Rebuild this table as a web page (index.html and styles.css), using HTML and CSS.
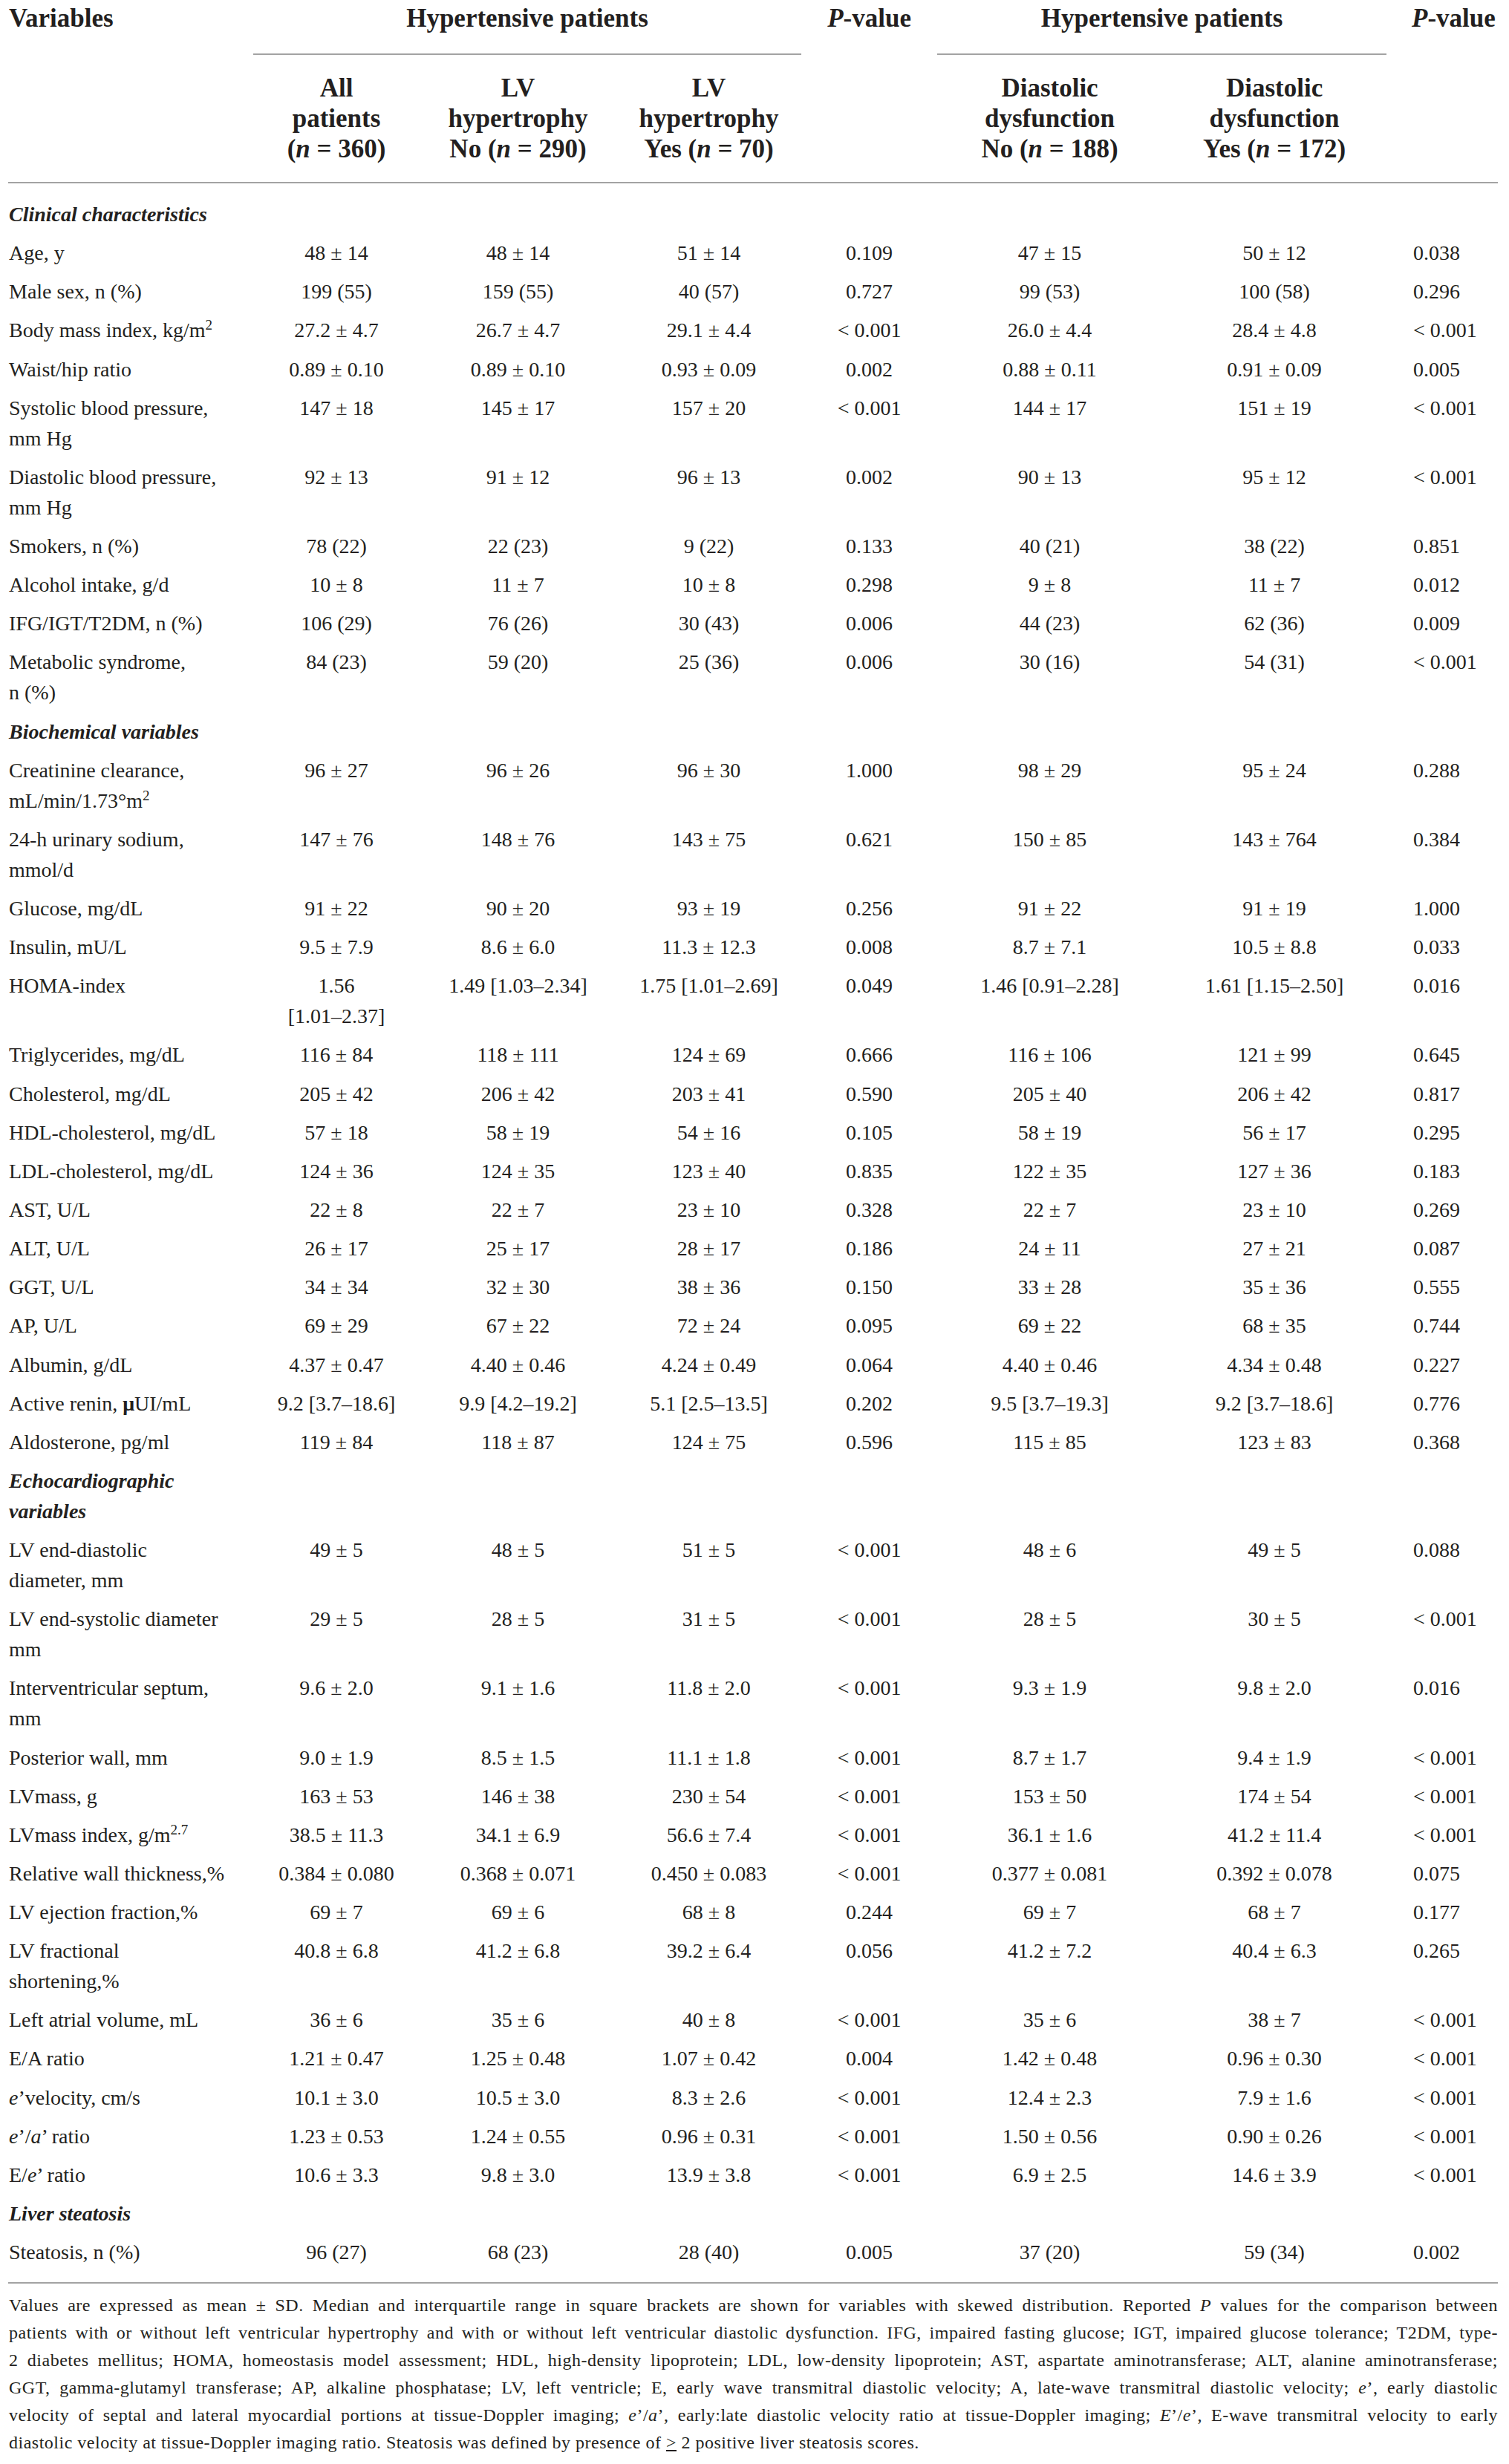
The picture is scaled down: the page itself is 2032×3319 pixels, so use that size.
FILE: index.html
```html
<!DOCTYPE html>
<html>
<head>
  <meta charset="UTF-8">
  <title>Characteristics of hypertensive patients</title>
  <link rel="stylesheet" href="styles.css">
</head>
<body>
  <div class="page">
    <table class="data-table">
      <colgroup>
        <col class="c-var">
        <col class="c-all">
        <col class="c-lvno">
        <col class="c-lvyes">
        <col class="c-p1">
        <col class="c-ddno">
        <col class="c-ddyes">
        <col class="c-p2">
      </colgroup>
      <thead>
        <tr class="head-top">
          <th rowspan="2" class="var-head">Variables</th>
          <th colspan="3" class="group">Hypertensive patients</th>
          <th rowspan="2" class="p-head"><i>P</i>-value</th>
          <th colspan="2" class="group">Hypertensive patients</th>
          <th rowspan="2" class="p-head p-last"><i>P</i>-value</th>
        </tr>
        <tr class="head-sub">
          <th>All<br>patients<br>(<i>n</i> = 360)</th>
          <th>LV<br>hypertrophy<br>No (<i>n</i> = 290)</th>
          <th>LV<br>hypertrophy<br>Yes (<i>n</i> = 70)</th>
          <th>Diastolic<br>dysfunction<br>No (<i>n</i> = 188)</th>
          <th>Diastolic<br>dysfunction<br>Yes (<i>n</i> = 172)</th>
        </tr>
      </thead>
      <tbody>
        <tr class="first-row"><td class="section">Clinical characteristics</td><td colspan="7"></td></tr>
        <tr><td>Age, y</td><td>48 ± 14</td><td>48 ± 14</td><td>51 ± 14</td><td>0.109</td><td>47 ± 15</td><td>50 ± 12</td><td>0.038</td></tr>
        <tr><td>Male sex, n&nbsp;(%)</td><td>199 (55)</td><td>159 (55)</td><td>40 (57)</td><td>0.727</td><td>99 (53)</td><td>100 (58)</td><td>0.296</td></tr>
        <tr><td>Body mass index, kg/m<sup>2</sup></td><td>27.2 ± 4.7</td><td>26.7 ± 4.7</td><td>29.1 ± 4.4</td><td>&lt; 0.001</td><td>26.0 ± 4.4</td><td>28.4 ± 4.8</td><td>&lt; 0.001</td></tr>
        <tr><td>Waist/hip ratio</td><td>0.89 ± 0.10</td><td>0.89 ± 0.10</td><td>0.93 ± 0.09</td><td>0.002</td><td>0.88 ± 0.11</td><td>0.91 ± 0.09</td><td>0.005</td></tr>
        <tr><td>Systolic blood pressure, mm Hg</td><td>147 ± 18</td><td>145 ± 17</td><td>157 ± 20</td><td>&lt; 0.001</td><td>144 ± 17</td><td>151 ± 19</td><td>&lt; 0.001</td></tr>
        <tr><td>Diastolic blood pressure, mm Hg</td><td>92 ± 13</td><td>91 ± 12</td><td>96 ± 13</td><td>0.002</td><td>90 ± 13</td><td>95 ± 12</td><td>&lt; 0.001</td></tr>
        <tr><td>Smokers, n&nbsp;(%)</td><td>78 (22)</td><td>22 (23)</td><td>9 (22)</td><td>0.133</td><td>40 (21)</td><td>38 (22)</td><td>0.851</td></tr>
        <tr><td>Alcohol intake, g/d</td><td>10 ± 8</td><td>11 ± 7</td><td>10 ± 8</td><td>0.298</td><td>9 ± 8</td><td>11 ± 7</td><td>0.012</td></tr>
        <tr><td>IFG/IGT/T2DM, n&nbsp;(%)</td><td>106 (29)</td><td>76 (26)</td><td>30 (43)</td><td>0.006</td><td>44 (23)</td><td>62 (36)</td><td>0.009</td></tr>
        <tr><td>Metabolic syndrome, n&nbsp;(%)</td><td>84 (23)</td><td>59 (20)</td><td>25 (36)</td><td>0.006</td><td>30 (16)</td><td>54 (31)</td><td>&lt; 0.001</td></tr>
        <tr><td class="section">Biochemical variables</td><td colspan="7"></td></tr>
        <tr><td>Creatinine clearance, mL/min/1.73°m<sup>2</sup></td><td>96 ± 27</td><td>96 ± 26</td><td>96 ± 30</td><td>1.000</td><td>98 ± 29</td><td>95 ± 24</td><td>0.288</td></tr>
        <tr><td>24-h urinary sodium, mmol/d</td><td>147 ± 76</td><td>148 ± 76</td><td>143 ± 75</td><td>0.621</td><td>150 ± 85</td><td>143 ± 764</td><td>0.384</td></tr>
        <tr><td>Glucose, mg/dL</td><td>91 ± 22</td><td>90 ± 20</td><td>93 ± 19</td><td>0.256</td><td>91 ± 22</td><td>91 ± 19</td><td>1.000</td></tr>
        <tr><td>Insulin, mU/L</td><td>9.5 ± 7.9</td><td>8.6 ± 6.0</td><td>11.3 ± 12.3</td><td>0.008</td><td>8.7 ± 7.1</td><td>10.5 ± 8.8</td><td>0.033</td></tr>
        <tr><td>HOMA-index</td><td>1.56 <span class="range">[1.01–2.37]</span></td><td>1.49 <span class="range">[1.03–2.34]</span></td><td>1.75 <span class="range">[1.01–2.69]</span></td><td>0.049</td><td>1.46 <span class="range">[0.91–2.28]</span></td><td>1.61 <span class="range">[1.15–2.50]</span></td><td>0.016</td></tr>
        <tr><td>Triglycerides, mg/dL</td><td>116 ± 84</td><td>118 ± 111</td><td>124 ± 69</td><td>0.666</td><td>116 ± 106</td><td>121 ± 99</td><td>0.645</td></tr>
        <tr><td>Cholesterol, mg/dL</td><td>205 ± 42</td><td>206 ± 42</td><td>203 ± 41</td><td>0.590</td><td>205 ± 40</td><td>206 ± 42</td><td>0.817</td></tr>
        <tr><td>HDL-cholesterol, mg/dL</td><td>57 ± 18</td><td>58 ± 19</td><td>54 ± 16</td><td>0.105</td><td>58 ± 19</td><td>56 ± 17</td><td>0.295</td></tr>
        <tr><td>LDL-cholesterol, mg/dL</td><td>124 ± 36</td><td>124 ± 35</td><td>123 ± 40</td><td>0.835</td><td>122 ± 35</td><td>127 ± 36</td><td>0.183</td></tr>
        <tr><td>AST, U/L</td><td>22 ± 8</td><td>22 ± 7</td><td>23 ± 10</td><td>0.328</td><td>22 ± 7</td><td>23 ± 10</td><td>0.269</td></tr>
        <tr><td>ALT, U/L</td><td>26 ± 17</td><td>25 ± 17</td><td>28 ± 17</td><td>0.186</td><td>24 ± 11</td><td>27 ± 21</td><td>0.087</td></tr>
        <tr><td>GGT, U/L</td><td>34 ± 34</td><td>32 ± 30</td><td>38 ± 36</td><td>0.150</td><td>33 ± 28</td><td>35 ± 36</td><td>0.555</td></tr>
        <tr><td>AP, U/L</td><td>69 ± 29</td><td>67 ± 22</td><td>72 ± 24</td><td>0.095</td><td>69 ± 22</td><td>68 ± 35</td><td>0.744</td></tr>
        <tr><td>Albumin, g/dL</td><td>4.37 ± 0.47</td><td>4.40 ± 0.46</td><td>4.24 ± 0.49</td><td>0.064</td><td>4.40 ± 0.46</td><td>4.34 ± 0.48</td><td>0.227</td></tr>
        <tr><td>Active renin, <b>μ</b>UI/mL</td><td>9.2 <span class="range">[3.7–18.6]</span></td><td>9.9 <span class="range">[4.2–19.2]</span></td><td>5.1 <span class="range">[2.5–13.5]</span></td><td>0.202</td><td>9.5 <span class="range">[3.7–19.3]</span></td><td>9.2 <span class="range">[3.7–18.6]</span></td><td>0.776</td></tr>
        <tr><td>Aldosterone, pg/ml</td><td>119 ± 84</td><td>118 ± 87</td><td>124 ± 75</td><td>0.596</td><td>115 ± 85</td><td>123 ± 83</td><td>0.368</td></tr>
        <tr><td class="section">Echocardiographic variables</td><td colspan="7"></td></tr>
        <tr><td>LV end-diastolic diameter, mm</td><td>49 ± 5</td><td>48 ± 5</td><td>51 ± 5</td><td>&lt; 0.001</td><td>48 ± 6</td><td>49 ± 5</td><td>0.088</td></tr>
        <tr><td>LV end-systolic diameter mm</td><td>29 ± 5</td><td>28 ± 5</td><td>31 ± 5</td><td>&lt; 0.001</td><td>28 ± 5</td><td>30 ± 5</td><td>&lt; 0.001</td></tr>
        <tr><td>Interventricular septum, mm</td><td>9.6 ± 2.0</td><td>9.1 ± 1.6</td><td>11.8 ± 2.0</td><td>&lt; 0.001</td><td>9.3 ± 1.9</td><td>9.8 ± 2.0</td><td>0.016</td></tr>
        <tr><td>Posterior wall, mm</td><td>9.0 ± 1.9</td><td>8.5 ± 1.5</td><td>11.1 ± 1.8</td><td>&lt; 0.001</td><td>8.7 ± 1.7</td><td>9.4 ± 1.9</td><td>&lt; 0.001</td></tr>
        <tr><td>LVmass, g</td><td>163 ± 53</td><td>146 ± 38</td><td>230 ± 54</td><td>&lt; 0.001</td><td>153 ± 50</td><td>174 ± 54</td><td>&lt; 0.001</td></tr>
        <tr><td>LVmass index, g/m<sup>2.7</sup></td><td>38.5 ± 11.3</td><td>34.1 ± 6.9</td><td>56.6 ± 7.4</td><td>&lt; 0.001</td><td>36.1 ± 1.6</td><td>41.2 ± 11.4</td><td>&lt; 0.001</td></tr>
        <tr><td>Relative wall thickness,%</td><td>0.384 ± 0.080</td><td>0.368 ± 0.071</td><td>0.450 ± 0.083</td><td>&lt; 0.001</td><td>0.377 ± 0.081</td><td>0.392 ± 0.078</td><td>0.075</td></tr>
        <tr><td>LV ejection fraction,%</td><td>69 ± 7</td><td>69 ± 6</td><td>68 ± 8</td><td>0.244</td><td>69 ± 7</td><td>68 ± 7</td><td>0.177</td></tr>
        <tr><td>LV fractional shortening,%</td><td>40.8 ± 6.8</td><td>41.2 ± 6.8</td><td>39.2 ± 6.4</td><td>0.056</td><td>41.2 ± 7.2</td><td>40.4 ± 6.3</td><td>0.265</td></tr>
        <tr><td>Left atrial volume, mL</td><td>36 ± 6</td><td>35 ± 6</td><td>40 ± 8</td><td>&lt; 0.001</td><td>35 ± 6</td><td>38 ± 7</td><td>&lt; 0.001</td></tr>
        <tr><td>E/A ratio</td><td>1.21 ± 0.47</td><td>1.25 ± 0.48</td><td>1.07 ± 0.42</td><td>0.004</td><td>1.42 ± 0.48</td><td>0.96 ± 0.30</td><td>&lt; 0.001</td></tr>
        <tr><td><i>e</i>’velocity, cm/s</td><td>10.1 ± 3.0</td><td>10.5 ± 3.0</td><td>8.3 ± 2.6</td><td>&lt; 0.001</td><td>12.4 ± 2.3</td><td>7.9 ± 1.6</td><td>&lt; 0.001</td></tr>
        <tr><td><i>e</i>’/<i>a</i>’ ratio</td><td>1.23 ± 0.53</td><td>1.24 ± 0.55</td><td>0.96 ± 0.31</td><td>&lt; 0.001</td><td>1.50 ± 0.56</td><td>0.90 ± 0.26</td><td>&lt; 0.001</td></tr>
        <tr><td>E/<i>e</i>’ ratio</td><td>10.6 ± 3.3</td><td>9.8 ± 3.0</td><td>13.9 ± 3.8</td><td>&lt; 0.001</td><td>6.9 ± 2.5</td><td>14.6 ± 3.9</td><td>&lt; 0.001</td></tr>
        <tr><td class="section">Liver steatosis</td><td colspan="7"></td></tr>
        <tr class="last-row"><td>Steatosis, n&nbsp;(%)</td><td>96 (27)</td><td>68 (23)</td><td>28 (40)</td><td>0.005</td><td>37 (20)</td><td>59 (34)</td><td>0.002</td></tr>
      </tbody>
    </table>

    <div class="footnote">
      <span class="line">Values are expressed as mean ± SD. Median and interquartile range in square brackets are shown for variables with skewed distribution. Reported <i>P</i> values for the comparison between</span>
      <span class="line">patients with or without left ventricular hypertrophy and with or without left ventricular diastolic dysfunction. IFG, impaired fasting glucose; IGT, impaired glucose tolerance; T2DM, type-</span>
      <span class="line">2 diabetes mellitus; HOMA, homeostasis model assessment; HDL, high-density lipoprotein; LDL, low-density lipoprotein; AST, aspartate aminotransferase; ALT, alanine aminotransferase;</span>
      <span class="line">GGT, gamma-glutamyl transferase; AP, alkaline phosphatase; LV, left ventricle; E, early wave transmitral diastolic velocity; A, late-wave transmitral diastolic velocity; <i>e</i>’, early diastolic</span>
      <span class="line">velocity of septal and lateral myocardial portions at tissue-Doppler imaging; <i>e</i>’/<i>a</i>’, early:late diastolic velocity ratio at tissue-Doppler imaging; <i>E</i>’/<i>e</i>’, E-wave transmitral velocity to early</span>
      <span class="line line-end">diastolic velocity at tissue-Doppler imaging ratio. Steatosis was defined by presence of <u>&gt;</u> 2 positive liver steatosis scores.</span>
    </div>
  </div>
</body>
</html>
```

FILE: styles.css
```css
body {
  margin: 0;
  background: #fff;
  color: #231f20;
  font-family: "Liberation Serif", "Times New Roman", serif;
}
.page {
  padding: 4px 0 0 11px;
  width: 2006px;
}

/* table */
.data-table {
  width: 2006px;
  table-layout: fixed;
  border-collapse: collapse;
  font-size: 28px;
  line-height: 41px;
}
.c-var { width: 330px; }
.c-all { width: 224px; }
.c-lvno { width: 265px; }
.c-lvyes { width: 249px; }
.c-p1 { width: 183px; }
.c-ddno { width: 303px; }
.c-ddyes { width: 302px; }
.c-p2 { width: 150px; }

thead {
  border-bottom: 2px solid #a3a3a3;
}
th {
  font-size: 35px;
  font-weight: bold;
  line-height: 41px;
  padding: 0;
  text-align: center;
  vertical-align: top;
}
.head-top th {
  padding-bottom: 27px;
}
.var-head {
  text-align: left;
  padding-left: 1px;
}
.group {
  border-bottom: 2px solid #a3a3a3;
}
.p-head.p-last {
  text-align: left;
  padding-left: 34px;
}
.head-sub th {
  padding: 24px 0 24px;
}

tbody {
  border-bottom: 2px solid #a3a3a3;
}
td {
  padding: 5px 20px 6.15px;
  text-align: center;
  vertical-align: top;
}
td:first-child {
  text-align: left;
  padding-left: 1px;
  padding-right: 35px;
}
td:last-child {
  text-align: left;
  padding-left: 36px;
  padding-right: 0;
}
.section {
  font-weight: bold;
  font-style: italic;
}
.range {
  white-space: nowrap;
}
.first-row td {
  padding-top: 21px;
}
.last-row td {
  padding-bottom: 20px;
}
sup {
  font-size: 0.68em;
  line-height: 0;
  vertical-align: 0.55em;
}

/* footnote */
.footnote {
  margin-top: 11px;
  padding-left: 1px;
  font-size: 24px;
  line-height: 37px;
  letter-spacing: 0.5px;
}
.footnote .line {
  display: block;
  text-align: justify;
  text-align-last: justify;
}
.footnote .line-end {
  text-align-last: left;
}
```
